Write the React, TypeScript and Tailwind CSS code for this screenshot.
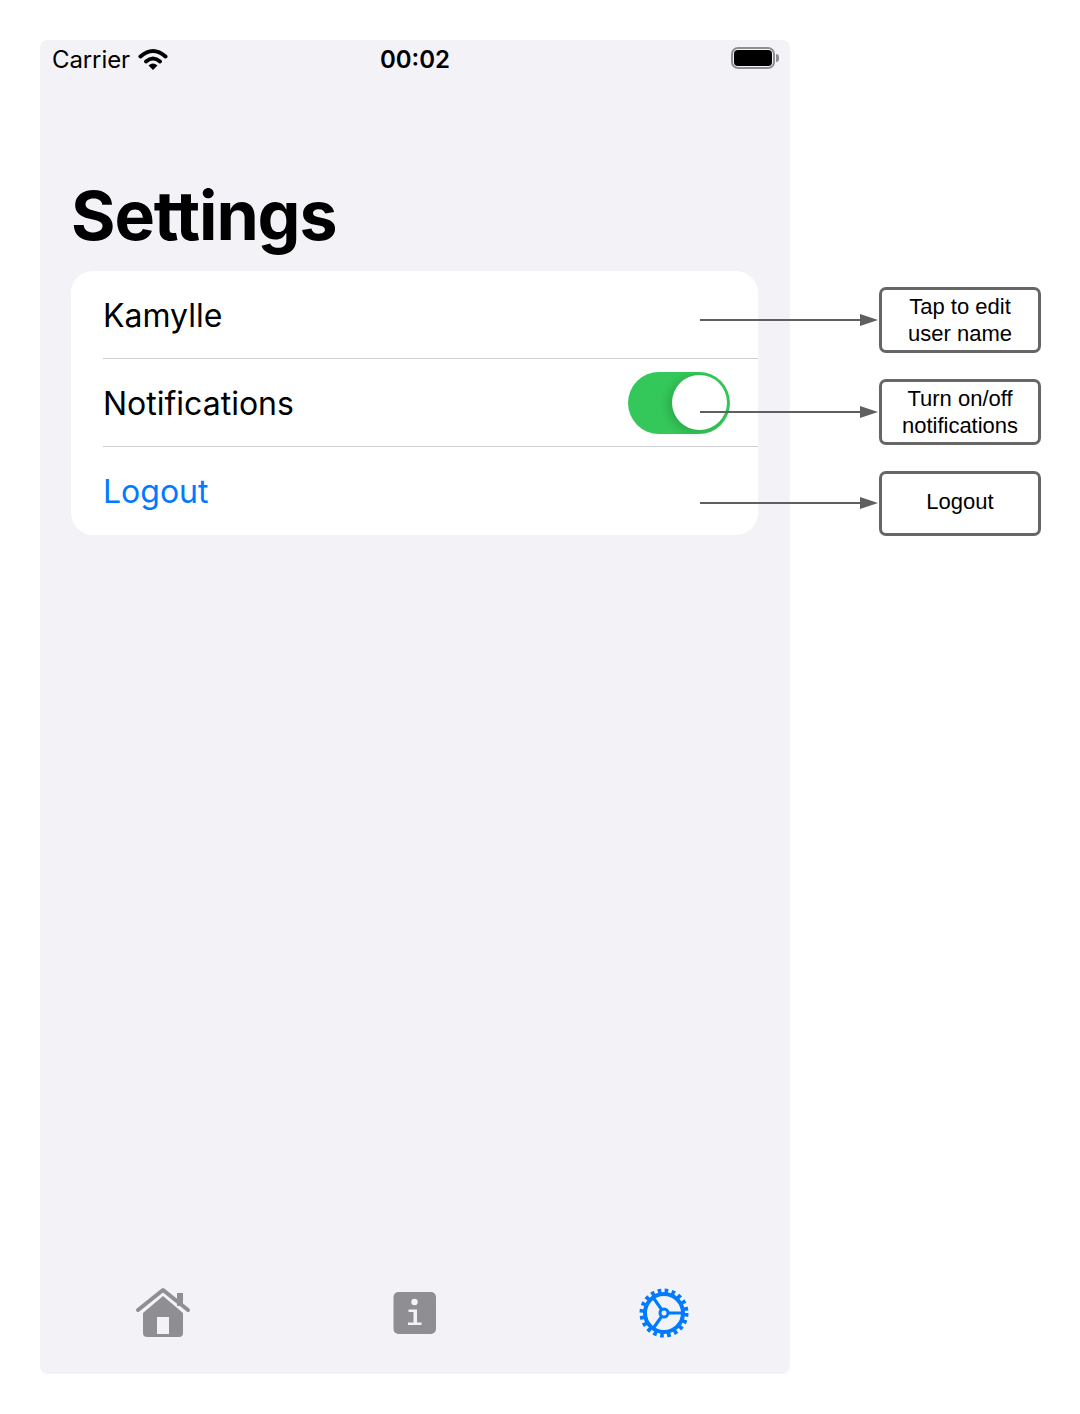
const callouts = [
  { lines: ["Tap to edit", "user name"], box: "mt-0 h-[66px]" },
  { lines: ["Turn on/off", "notifications"], box: "mt-[26px] h-[66px]" },
  { lines: ["Logout"], box: "mt-[26px] h-[65px] pb-[4px]" },
];

const arrowRows = [320, 412, 503];

function WifiIcon() {
  return (
    <svg width="30" height="24" viewBox="0 0 30 24" className="ml-[8px] -translate-y-[1px]">
      <path d="M2.5 9.5 Q15 -1.5 27.5 9.5" fill="none" stroke="#000" strokeWidth="4" strokeLinecap="round" />
      <path d="M8 14.5 Q15 8.5 22 14.5" fill="none" stroke="#000" strokeWidth="4" strokeLinecap="round" />
      <path d="M10.5 18.5 Q15 14.5 19.5 18.5 L15 23 Z" fill="#000" />
    </svg>
  );
}

function BatteryIcon() {
  return (
    <div className="flex -translate-y-[2px] items-center">
      <div className="flex h-[22px] w-[44px] items-center justify-center rounded-[7px] border-2 border-[#8e8e93]">
        <div className="h-[16px] w-[38px] rounded-[4px] bg-black" />
      </div>
      <div className="ml-[1px] h-[8px] w-[3px] rounded-r-full bg-[#8e8e93]" />
    </div>
  );
}

function HomeIcon() {
  return (
    <svg width="60" height="52" viewBox="0 0 60 52">
      <path d="M3 23 L28 3 L53 23" fill="none" stroke="#8e8e93" strokeWidth="4" strokeLinecap="round" strokeLinejoin="round" />
      <rect x="42" y="6" width="6" height="13" fill="#8e8e93" />
      <path d="M8 26 L28 9 L48 26 V46 Q48 50 44 50 H12 Q8 50 8 46 Z" fill="#8e8e93" />
      <rect x="22" y="30" width="12" height="17" fill="#f2f2f7" />
    </svg>
  );
}

function InfoIcon() {
  return (
    <svg width="44" height="44" viewBox="0 0 44 44">
      <rect x="0.5" y="1" width="42.5" height="42" rx="5" fill="#8e8e93" />
      <circle cx="21.5" cy="11" r="3.2" fill="#f2f2f7" />
      <path d="M15.5 18.5 H24 V31.5 H28.5 V34 H15 V31.5 H20.5 V21 H15.5 Z" fill="#f2f2f7" />
    </svg>
  );
}

function GearIcon() {
  return (
    <svg width="52" height="52" viewBox="0 0 52 52">
      <circle cx="25" cy="26" r="22" fill="none" stroke="#007aff" strokeWidth="5" strokeDasharray="3.6 3.31" />
      <circle cx="25" cy="26" r="19" fill="none" stroke="#007aff" strokeWidth="4" />
      <circle cx="25" cy="26" r="4" fill="none" stroke="#007aff" strokeWidth="3" />
      <path d="M29 26 H43 M22.7 22.7 L14.5 11 M22.7 29.3 L14.5 41" fill="none" stroke="#007aff" strokeWidth="3.2" />
    </svg>
  );
}

function Toggle() {
  return (
    <div className="mr-[28px] flex h-[62px] w-[102px] items-center justify-end rounded-full bg-[#34c759] pr-[3px]">
      <div className="h-[55px] w-[55px] rounded-full bg-white shadow-[-4px_2px_8px_rgba(0,0,0,0.15)]" />
    </div>
  );
}

export default function App() {
  return (
    <div className="relative h-[1414px] w-[1080px] bg-white font-['Inter',sans-serif]">
      <div className="flex pl-[40px] pt-[40px]">
        <div className="flex h-[1334px] w-[750px] flex-col rounded-[8px] bg-[#f2f2f7]">
          <div className="grid h-[40px] grid-cols-3 items-center text-black">
            <div className="flex items-center pl-[12px]">
              <span className="text-[24px] tracking-[-0.1px]">Carrier</span>
              <WifiIcon />
            </div>
            <div className="text-center text-[24px] font-semibold">00:02</div>
            <div className="flex justify-end pr-[11px]">
              <BatteryIcon />
            </div>
          </div>

          <h1 className="mt-[94px] pl-[31px] text-[68px] font-bold leading-[82px] tracking-[-1.1px] text-black [font-variant-ligatures:none]">Settings</h1>

          <div className="ml-[31px] mt-[15px] w-[687px] rounded-[22px] bg-white text-[32px] text-black">
            <div className="ml-[32px] flex h-[88px] items-center border-b border-[#cfcfd3] pt-[2px]">Kamylle</div>
            <div className="ml-[32px] flex h-[88px] items-center justify-between border-b border-[#cfcfd3]">
              <span className="pt-[2px]">Notifications</span>
              <Toggle />
            </div>
            <div className="ml-[32px] flex h-[88px] items-center pt-[2px] text-[#007aff]">Logout</div>
          </div>

          <div className="mt-auto grid grid-cols-3 items-center justify-items-center pb-[35px]">
            <HomeIcon />
            <InfoIcon />
            <GearIcon />
          </div>
        </div>

        <div className="ml-[89px] mt-[247px] flex flex-col font-['Liberation_Sans',sans-serif] text-[22px] leading-[27px] text-black">
          {callouts.map((c) => (
            <div
              key={c.lines[0]}
              className={`flex w-[162px] flex-col items-center justify-center rounded-[7px] border-[3px] border-[#666666] bg-white text-center ${c.box}`}
            >
              {c.lines.map((line) => (
                <span key={line}>{line}</span>
              ))}
            </div>
          ))}
        </div>
      </div>

      {/* leader lines sit over the phone and the boxes */}
      <svg className="absolute left-0 top-0" width="1080" height="1414">
        {arrowRows.map((y) => (
          <g key={y}>
            <line x1="700" y1={y} x2="862" y2={y} stroke="#5f5f5f" strokeWidth="2" />
            <path d={`M860 ${y - 6} L878 ${y} L860 ${y + 6} Z`} fill="#5f5f5f" />
          </g>
        ))}
      </svg>
    </div>
  );
}
